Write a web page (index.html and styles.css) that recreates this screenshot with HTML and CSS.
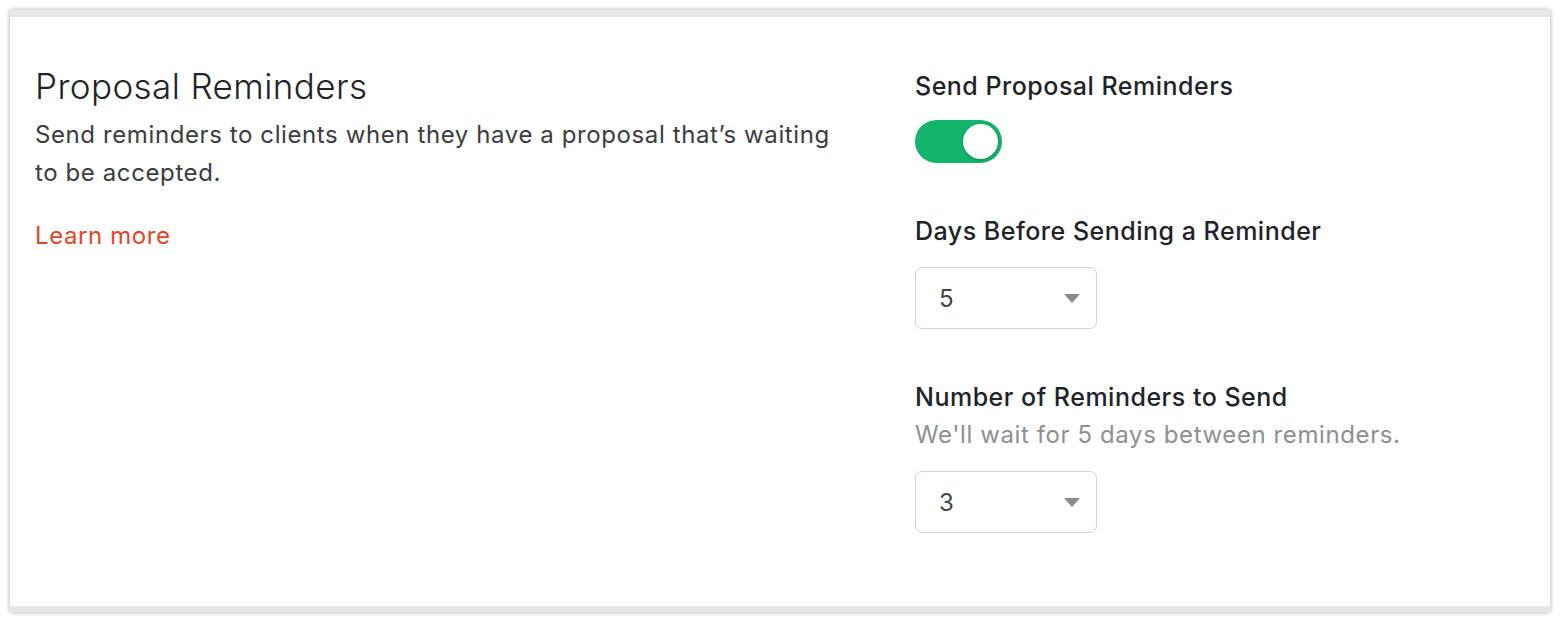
FILE: index.html
```html
<!DOCTYPE html>
<html lang="en">
<head>
    <meta charset="UTF-8">
    <title>Proposal Reminders</title>
    <link rel="stylesheet" href="styles.css">
</head>
<body>
    <div class="panel">
        <div class="settings">
            <div class="intro">
                <h2>Proposal Reminders</h2>
                <p>Send reminders to clients when they have a proposal that’s waiting to be accepted.</p>
                <a href="#" class="learn-more">Learn more</a>
            </div>
            <div class="fields">
                <div class="field">
                    <label>Send Proposal Reminders</label>
                    <div class="toggle on"><span class="knob"></span></div>
                </div>
                <div class="field">
                    <label>Days Before Sending a Reminder</label>
                    <div class="select">
                        <span>5</span>
                        <span class="caret"></span>
                    </div>
                </div>
                <div class="field">
                    <label>Number of Reminders to Send</label>
                    <div class="hint">We'll wait for 5 days between reminders.</div>
                    <div class="select">
                        <span>3</span>
                        <span class="caret"></span>
                    </div>
                </div>
            </div>
        </div>
    </div>
</body>
</html>
```
FILE: styles.css
```css
body {
    margin: 0;
    background: #fff;
    font-family: Inter, "Noto Sans", sans-serif;
    color: #2b2d31;
}
.panel {
    margin: 10px;
    height: 589px;
    background: #fff;
    border-top: 7px solid #e8e8ea;
    border-bottom: 6px solid #e8e8ea;
    box-shadow: 0 0 5px rgba(0, 0, 0, 0.35);
}
.settings {
    display: flex;
    padding: 48px 25px 0 25px;
}
.intro {
    width: 820px;
    margin-right: 60px;
}
.intro h2 {
    margin: 0;
    font-size: 35px;
    font-weight: 300;
    line-height: 42px;
    letter-spacing: 0.4px;
    color: #1f2328;
}
.intro p {
    margin: 9px 0 0 0;
    font-size: 24px;
    line-height: 38px;
    letter-spacing: 0.6px;
    color: #3a3c40;
}
.learn-more {
    display: inline-block;
    margin-top: 29px;
    font-size: 24px;
    letter-spacing: 0.6px;
    color: #e2462a;
    text-decoration: none;
}
.fields {
    display: flex;
    flex-direction: column;
}
.field {
    margin-bottom: 47px;
}
.field label {
    display: block;
    font-size: 25px;
    font-weight: 500;
    line-height: 42px;
    letter-spacing: 0.5px;
    color: #1f2328;
}
.hint {
    font-size: 24px;
    line-height: 34px;
    letter-spacing: 0.6px;
    color: #8e8f94;
    margin-bottom: 19px;
}
.toggle {
    width: 87px;
    height: 43px;
    margin-top: 13px;
    border-radius: 22px;
    background: #12b36b;
    position: relative;
}
.knob {
    position: absolute;
    top: 4px;
    right: 4px;
    width: 35px;
    height: 35px;
    border-radius: 50%;
    background: #fff;
    box-shadow: 0 1px 3px rgba(0, 0, 0, 0.25);
}
.select {
    width: 182px;
    height: 62px;
    margin-top: 15px;
    box-sizing: border-box;
    border: 1px solid #d3d4d7;
    border-radius: 7px;
    display: flex;
    align-items: center;
    justify-content: space-between;
    padding: 0 16px 0 23px;
    font-size: 24px;
    color: #444;
}
.caret {
    width: 0;
    height: 0;
    border-left: 8px solid transparent;
    border-right: 8px solid transparent;
    border-top: 9px solid #8a8b90;
}
```
